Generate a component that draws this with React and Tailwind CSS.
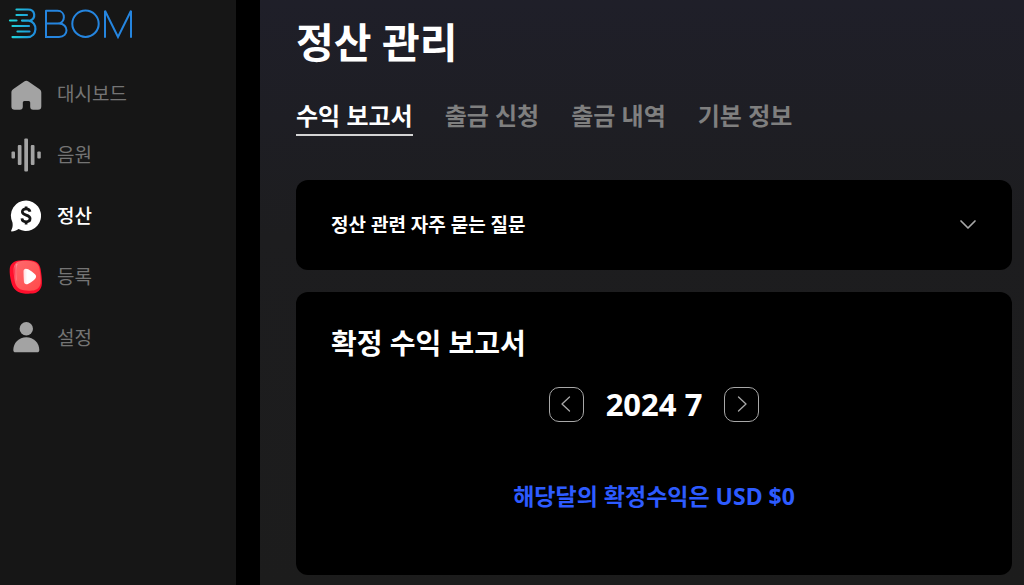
import React, { useState } from 'react';

const HomeIcon = () => (
  <svg viewBox="0 0 36 36" className="w-9 h-9" fill="#a3a3a3" aria-hidden="true">
    <path d="M16.200 5.500a3.600 3.600 0 0 1 4.200 0l10.900 7.400c1.300.9 2 2 2 3.500v14.100a3.300 3.300 0 0 1-3.300 3.300h-4.800a3 3 0 0 1-3-3v-4.300a1.500 1.500 0 0 0-1.500-1.500h-4.400a1.500 1.500 0 0 0-1.500 1.500v4.300a3 3 0 0 1-3 3H6.700a3.300 3.300 0 0 1-3.300-3.300V16.400c0-1.500.7-2.600 2-3.500z" />
  </svg>
);

const WaveIcon = () => (
  <svg viewBox="0 0 36 36" className="w-9 h-9" fill="#a3a3a3" aria-hidden="true">
    <rect x="3.500" y="14.500" width="3.500" height="7" rx="1" />
    <rect x="9.800" y="8" width="3.700" height="20" rx="1" />
    <rect x="16.300" y="1.500" width="3.700" height="33" rx="1" />
    <rect x="22.800" y="8" width="3.700" height="20" rx="1" />
    <rect x="29.300" y="14.500" width="3.500" height="7" rx="1" />
  </svg>
);

const SettlementIcon = () => (
  <svg viewBox="0 0 36 36" className="w-9 h-9" aria-hidden="true">
    <path d="M18.200 2.500A15.200 15.200 0 1 1 10.500 31C8.500 32.500 6 33.300 3.600 33.400c-.5 0-.6-.5-.4-.9 1.400-3 1.800-5 1.200-8.200A15.200 15.200 0 0 1 18.200 2.500z" fill="#fff" />
    <g fill="none" stroke="#161616" strokeWidth="2.700">
      <path d="M22 13.700c-.3-1.800-1.900-2.900-3.900-2.900-2.200 0-3.800 1.200-3.800 3 0 4.200 7.800 2.400 7.800 6.700 0 2-1.700 3.300-4 3.300-2.200 0-4-1.200-4.200-3.400" />
      <path d="M18.100 8.500v3M18.100 23v3.500" />
    </g>
  </svg>
);

const RegisterIcon = () => (
  <svg viewBox="0 0 36 36" className="w-9 h-9" aria-hidden="true">
    <defs>
      <linearGradient id="registerFace" x1="0" y1="0" x2="1" y2="1">
        <stop offset="0" stopColor="#ff6a6e" />
        <stop offset="1" stopColor="#ff4a4a" />
      </linearGradient>
      <linearGradient id="registerShine" x1="0" y1="0" x2="1" y2="0">
        <stop offset="0" stopColor="#ff2540" />
        <stop offset="1" stopColor="#ffb4b8" />
      </linearGradient>
      <linearGradient id="registerPlay" x1="0" y1="0" x2="1" y2="0">
        <stop offset="0" stopColor="#ffdcdd" />
        <stop offset="0.300" stopColor="#fff" />
      </linearGradient>
    </defs>
    <path d="M11 1.500C16 .8 20 .8 24 1.500c5 .8 8 4 8.600 8.500.9 5.500 1.500 10 1.300 14.500-.2 6-4.400 9.800-9.400 10.100-4.500.3-7 .2-10-.4-6-.9-9.500-4.700-11-10.200C2 18.500 1.500 14.500 1.700 10c.4-5.300 4.300-7.900 9.300-8.500z" fill="#ff0f2d" />
    <path d="M12 2.200c4-.6 8-.6 11.500 0 5 .8 7.500 3.600 8.100 8 .8 5.300 1.300 8.900 1.100 13-.2 5-4 8-8.400 8.400-3.500.3-6 .2-8.500-.3-5.600-.8-8.100-4.300-9-9-.8-5-1.300-8.500-1.200-12.100.1-4.500 2.400-7.400 6.400-8z" fill="url(#registerFace)" />
    <path d="M8.300 5C6 7.500 6 12 6.700 17.500c.3 3 .8 4.500 1.400 4.500.7-1 .3-4 .1-8-.2-4 .3-6.500 1.100-8.500.2-.8-.4-1.100-1-.5z" fill="url(#registerShine)" />
    <path d="M15.500 12.500c-.1-3 2.300-3.500 4.700-2.200 2.500 1.300 4.800 3 6.800 5 1.400 1.400 1.500 3 .2 4.500-1.900 2.100-4.200 3.700-6.800 5-2.300 1.100-4.300.5-4.500-2.200-.3-3.400-.3-6.700-.4-10.100z" fill="url(#registerPlay)" />
  </svg>
);

const ProfileIcon = () => (
  <svg viewBox="0 0 36 36" className="w-9 h-9" fill="#a3a3a3" aria-hidden="true">
    <circle cx="18.300" cy="8.700" r="6.700" />
    <path d="M18.300 17.200c7.400 0 13 5.600 13 12.800 0 1.400-.8 2.300-2.200 2.300H7.500c-1.400 0-2.200-.9-2.200-2.300 0-7.200 5.600-12.800 13-12.800z" />
  </svg>
);

const Logo = () => (
  <svg viewBox="0 0 126 34" className="w-[126px] h-[34px]" fill="none" strokeLinecap="round" role="img" aria-label="BBOM">
    <defs>
      <linearGradient id="logoMark" gradientUnits="userSpaceOnUse" x1="2" y1="0" x2="29" y2="0">
        <stop offset="0" stopColor="#20d8d8" />
        <stop offset="1" stopColor="#1f86dc" />
      </linearGradient>
    </defs>
    <g stroke="url(#logoMark)" strokeWidth="2.200">
      <path d="M8.500 3.500H20c7.500 0 8.500 9 1.500 11.200M8.500 9H19M2 14.500H8.500M14 14.600H20.500c9.500 1 9.500 16.500-1.500 16.500H4.500M4.500 20H21M9.500 25.500H21.500" />
    </g>
    <g stroke="#2585df" strokeWidth="2">
      <path d="M38 4.800H49.500C58 4.800 58 17.600 49.500 17.600H38M49.500 17.600H51C61 17.600 61 31 51 31H38V4.800" />
      <circle cx="77.500" cy="17.700" r="13.200" />
      <path d="M97 31V4.800L110 31 123 4.800V31" />
    </g>
  </svg>
);

const Chevron = ({ d, className }) => (
  <svg viewBox="0 0 18 18" className={className} fill="none" strokeLinecap="round" strokeLinejoin="round" aria-hidden="true">
    <path d={d} />
  </svg>
);

const menu = [
  { id: 'dashboard', label: '대시보드', Icon: HomeIcon },
  { id: 'sound', label: '음원', Icon: WaveIcon },
  { id: 'settlement', label: '정산', Icon: SettlementIcon },
  { id: 'register', label: '등록', Icon: RegisterIcon },
  { id: 'settings', label: '설정', Icon: ProfileIcon },
];

const tabs = ['수익 보고서', '출금 신청', '출금 내역', '기본 정보'];

export default function App() {
  const [activeTab, setActiveTab] = useState(0);
  const [faqOpen, setFaqOpen] = useState(false);
  const [month, setMonth] = useState({ year: 2024, month: 7 });

  const moveMonth = (step) => {
    const next = new Date(month.year, month.month - 1 + step, 1);
    setMonth({ year: next.getFullYear(), month: next.getMonth() + 1 });
  };

  return (
    <div className="flex min-h-screen gap-6 bg-black text-white font-['Noto_Sans','Noto_Sans_CJK_KR',sans-serif]">
      <aside className="w-[236px] shrink-0 bg-[#161616] px-2 pt-[6px]">
        <a href="#home" className="block">
          <Logo />
        </a>
        <nav className="mt-9 flex flex-col gap-[25px]">
          {menu.map(({ id, label, Icon }) => (
            <a
              key={id}
              href={`#${id}`}
              className={`flex items-center gap-[13px] text-[19px] leading-9 ${
                id === 'settlement' ? 'text-white font-medium' : 'text-[#747474]'
              }`}
            >
              <Icon />
              <span>{label}</span>
            </a>
          ))}
        </nav>
      </aside>

      <main className="flex-1 min-w-0 bg-linear-to-b from-[#1f1f29] via-[#1d1d1f] via-40% to-[#1c1c1c] pl-9 pr-3 pb-[10px]">
        <h1 className="pt-3 text-[41px] leading-[60px] font-bold">정산 관리</h1>

        <div role="tablist" className="mt-[26px] flex gap-8">
          {tabs.map((tab, index) => (
            <button
              key={tab}
              type="button"
              role="tab"
              aria-selected={activeTab === index}
              onClick={() => setActiveTab(index)}
              className={`border-b-2 text-2xl leading-9 font-bold whitespace-nowrap ${
                activeTab === index ? 'border-[#d4d4d4] text-white' : 'border-transparent text-[#7f7f7f]'
              }`}
            >
              {tab}
            </button>
          ))}
        </div>

        <section className="mt-11 rounded-xl bg-black">
          <button
            type="button"
            aria-expanded={faqOpen}
            onClick={() => setFaqOpen(!faqOpen)}
            className="flex w-full items-center justify-between py-[30px] px-[35px] text-[19px] leading-[30px] font-bold"
          >
            <span>정산 관련 자주 묻는 질문</span>
            <Chevron d="M2 5L9 12L16 5" className="w-[18px] h-[18px] stroke-[#a8a8a8] stroke-[1.700]" />
          </button>
        </section>

        <section className="mt-[22px] rounded-xl bg-black px-[35px] pt-[30px] pb-[61px]">
          <h2 className="text-[28px] leading-[42px] font-bold">확정 수익 보고서</h2>
          <div className="mt-[18px] flex items-center justify-center gap-[22px]">
            <button
              type="button"
              aria-label="이전 달"
              onClick={() => moveMonth(-1)}
              className="flex w-[35px] h-[35px] items-center justify-center rounded-[10px] border border-[#a8a8a8]"
            >
              <Chevron d="M12.500 2L5 9L12.500 16" className="w-[18px] h-[18px] stroke-[#a8a8a8] stroke-[1.300]" />
            </button>
            <span className="text-[31px] leading-[44px] font-bold">
              {month.year} {month.month}
            </span>
            <button
              type="button"
              aria-label="다음 달"
              onClick={() => moveMonth(1)}
              className="flex w-[35px] h-[35px] items-center justify-center rounded-[10px] border border-[#a8a8a8]"
            >
              <Chevron d="M5.500 2L13 9L5.500 16" className="w-[18px] h-[18px] stroke-[#a8a8a8] stroke-[1.300]" />
            </button>
          </div>
          <p className="mt-[52px] text-center text-[23px] leading-9 font-bold text-[#2d5bff]">
            해당달의 확정수익은 USD $0
          </p>
        </section>
      </main>
    </div>
  );
}
